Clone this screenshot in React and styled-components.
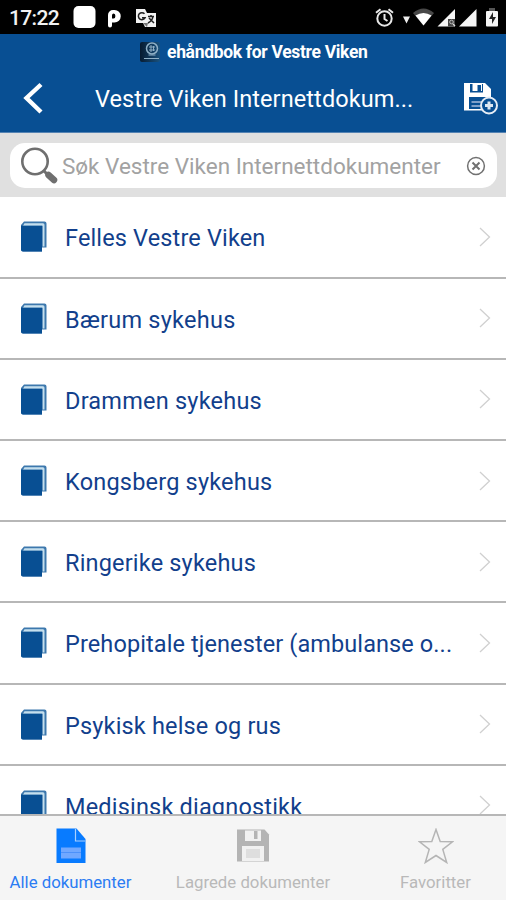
import React from 'react';
import styled, { createGlobalStyle } from 'styled-components';

const GlobalStyle = createGlobalStyle`
  * { box-sizing: border-box; }
  body { margin: 0; background: #fff; font-family: Roboto, sans-serif; }
`;

const Screen = styled.div`
  display: flex;
  flex-direction: column;
  width: 506px;
  height: 900px;
  overflow: hidden;
  background: #fff;
`;

const StatusBar = styled.div`
  display: flex;
  flex: none;
  align-items: center;
  justify-content: space-between;
  height: 34px;
  padding: 0 7px 0 9px;
  background: #000;
`;

const StatusGroup = styled.div`
  display: flex;
  align-items: center;
  height: 34px;
`;

const Clock = styled.span`
  width: 64px;
  color: #f2f2f2;
  font-size: 21px;
  font-weight: 500;
  line-height: 34px;
  letter-spacing: -0.65px;
  padding-top: 2px;
`;

const Header = styled.header`
  flex: none;
  height: 99px;
  background: #084f93;
  border-bottom: 1px solid #5583b3;
`;

const Brand = styled.div`
  display: flex;
  align-items: center;
  height: 36px;
  padding: 0 0 0 140px;
  gap: 7px;
  color: #fff;
  font-size: 17.5px;
  font-weight: 700;
  letter-spacing: -0.32px;
  white-space: nowrap;
`;

const TitleRow = styled.div`
  display: flex;
  align-items: center;
  height: 58px;
  padding: 0 8px 0 22px;
`;

const Title = styled.h1`
  flex: 1;
  margin: 0 0 0 51px;
  color: #fff;
  font-size: 23.5px;
  font-weight: 400;
  letter-spacing: 0.1px;
  line-height: 58px;
  white-space: nowrap;
`;

const SearchBar = styled.div`
  flex: none;
  height: 64px;
  padding: 10px 9px 9px 10px;
  background: #e0e0e0;
`;

const SearchField = styled.div`
  display: flex;
  align-items: center;
  height: 45px;
  padding: 0 11px 0 9px;
  border-radius: 15px;
  background: #fff;
`;

const Placeholder = styled.span`
  flex: 1;
  margin-left: 3px;
  padding-top: 2px;
  color: #a2a2a2;
  font-size: 22.5px;
  line-height: 45px;
  white-space: nowrap;
`;

const List = styled.main`
  flex: 1;
  min-height: 0;
  overflow: hidden;
`;

const Row = styled.div`
  display: flex;
  align-items: center;
  height: 81.2px;
  padding: 0 14px 0 20px;
  border-bottom: 2px solid #b7b7b7;

  &:first-child {
    height: 81.6px;
  }
`;

const RowLabel = styled.span`
  flex: 1;
  margin-left: 18px;
  padding-top: 3px;
  color: #123f8c;
  font-size: 23.5px;
  letter-spacing: ${(p) => p.$spacing}px;
  white-space: nowrap;
`;

const NavBar = styled.nav`
  display: flex;
  flex: none;
  height: 86px;
  background: #f5f5f5;
  border-top: 2px solid #b7b7b7;
`;

const NavItem = styled.div`
  display: flex;
  flex-direction: column;
  align-items: center;
  width: ${(p) => p.$width}px;
  padding-top: 12px;
  color: ${(p) => (p.$active ? '#2b7cf3' : '#b9b9b9')};
`;

const NavLabel = styled.span`
  margin-top: 6px;
  font-size: 16.8px;
  line-height: 24px;
  white-space: nowrap;
`;

const NotificationIcons = () => (
  <svg width="90" height="24" viewBox="0 0 90 24">
    <rect x="0.5" y="1" width="22" height="22" rx="5" fill="#fff" />
    <path d="M35 20.500a2 2 0 0 0 4 0v-3h2.500a6.200 6.200 0 0 0 0-12.500H40a5 5 0 0 0-5 5zM39 10.500q0-2 1.700-2t1.700 2.500-1.700 2.500H39z" fill="#fff" fillRule="evenodd" />
    <path d="M63 4h9l2 4h9v14H72l-2-4h-7z" fill="#f2f2f2" />
    <path d="M71.500 8.800a3.500 3.500 0 1 0 .5 4h-3M75 11.500h6M78 10v1.500M80 11.500c-.5 3-2 5-5 6.500M76 13l5 5" fill="none" stroke="#222" strokeWidth="1.500" />
    <path d="M70 18l4 4 1-4z" fill="#777" />
  </svg>
);

const SystemIcons = () => (
  <svg width="124" height="24" viewBox="0 0 124 24">
    <g fill="none" stroke="#e8e8e8" strokeWidth="2">
      <circle cx="9.500" cy="13.500" r="7.200" />
      <path d="M9.500 9v5l3 2M1 7.800l4.500-3.600M18 7.800l-4.500-3.600" />
    </g>
    <path d="M28 11.500h7l-3.500 7z" fill="#eee" />
    <path d="M38 8Q48.500 -1 59 8l-10.500 12.500z" fill="#484848" />
    <path d="M40.500 10.500Q48.500 5.500 56.500 10.500L48.500 20.500z" fill="#fff" />
    <path d="M62.500 21.500L80 4v17.500zM84 21.500L101.500 4v17.500z" fill="#f5f5f5" />
    <rect x="73" y="14" width="7" height="7.500" fill="#444" />
    <path d="M80 21l-2-2" stroke="#ddd" strokeWidth="1.500" />
    <circle cx="76.500" cy="17" r="1.800" fill="none" stroke="#bbb" />
    <path d="M114 3h6v3h-6z" fill="#555" />
    <rect x="111" y="6" width="12" height="15.500" rx="1" fill="#f5f5f5" />
    <path d="M118 7l-4 7h3v5l4-7h-3z" fill="#222" />
  </svg>
);

const BrandIcon = () => (
  <svg width="20" height="20" viewBox="0 0 20 20">
    <defs>
      <linearGradient id="brandShade">
        <stop stopColor="#071b30" />
        <stop offset="1" stopColor="#19527f" />
      </linearGradient>
    </defs>
    <rect width="20" height="20" rx="2" fill="url(#brandShade)" />
    <g fill="none" stroke="#8fb0c6">
      <circle cx="12" cy="6.500" r="5.500" strokeWidth="1.500" />
      <path d="M9 5h6M9 8h6M11 3v7M13.500 4v5M8.500 13h7M4 16.500h15" />
    </g>
  </svg>
);

const BackIcon = () => (
  <svg width="22" height="34" viewBox="0 0 22 34">
    <path d="M19 2.500L4.500 16l14.500 14" fill="none" stroke="#fff" strokeWidth="4.400" />
  </svg>
);

const SaveAddIcon = () => (
  <svg width="34" height="34" viewBox="0 0 34 34">
    <path d="M0 1h21l6 6v21.500H0z" fill="#fff" />
    <path d="M6 2h2.500v7H18V2h1v8.500H6zM5 15h18v12H5z" fill="#084f93" />
    <path d="M13.500 3h3.500v6h-3.500z" fill="#084f93" />
    <path d="M7.500 20h10M7.500 24h9" stroke="#7fa0c9" strokeWidth="2" />
    <circle cx="25" cy="23.500" r="8" fill="#084f93" stroke="#e6edf5" strokeWidth="2" />
    <path d="M25 19.500v8M21 23.500h8" stroke="#dce7f2" strokeWidth="3" />
  </svg>
);

const SearchIcon = () => (
  <svg width="40" height="40" viewBox="0 0 40 40">
    <circle cx="16" cy="15.500" r="12.700" fill="none" stroke="#6f6f6f" strokeWidth="2.600" />
    <path d="M24.500 24.500l4 4" stroke="#6f6f6f" strokeWidth="3" />
    <path d="M29.500 29l5.500 5" stroke="#6f6f6f" strokeWidth="6.500" strokeLinecap="round" />
  </svg>
);

const ClearIcon = () => (
  <svg width="20" height="20" viewBox="0 0 20 20" fill="none" stroke="#717171">
    <circle cx="10" cy="10" r="8.400" strokeWidth="1.500" />
    <path d="M6.500 6.500l7 7M13.500 6.500l-7 7" strokeWidth="2" />
  </svg>
);

const BookIcon = () => (
  <svg width="27" height="31" viewBox="0 0 27 31">
    <path d="M4 0.500h20.500a2 2 0 0 1 2 2V26.500h-4.500v4H3a2 2 0 0 1-2-2V4z" fill="#3d78ad" />
    <path d="M4.500 2.200H23q1.500 0 1.500 1.500V25.500h-1.800V4.800H3z" fill="#c5dfee" />
    <path d="M1 4.800h21V30.500H3a2 2 0 0 1-2-2z" fill="#084f93" />
  </svg>
);

const ChevronIcon = () => (
  <svg width="14" height="22" viewBox="0 0 14 22">
    <path d="M2 2l9.500 9L2 20" fill="none" stroke="#d0d0d0" strokeWidth="1.300" />
  </svg>
);

const DocumentIcon = () => (
  <svg width="30" height="36" viewBox="0 0 30 36">
    <path d="M0.500 0.500h20L29.500 11v24h-29z" fill="#087bff" />
    <path d="M19.500 1v12h9.500" fill="none" stroke="#a7d0ff" strokeWidth="1.200" />
    <path d="M5 19.500h20v11H5z" fill="#70a8ff" />
    <path d="M5 24.500h20" stroke="#4c91fa" />
  </svg>
);

const SaveIcon = () => (
  <svg width="34" height="36" viewBox="0 0 34 36">
    <path d="M1 1.500h27.500l4.500 5v27H1z" fill="#b4b4b4" />
    <path d="M9 2.500h16v10.500H9zM6 18h22v15H6z" fill="#f1f1f1" />
    <path d="M18 3h3.500v8H18z" fill="#b4b4b4" />
    <path d="M10 21h14v9H10z" fill="#dedede" />
  </svg>
);

const StarIcon = () => (
  <svg width="36" height="36" viewBox="0 0 36 36">
    <path d="M18 1.500l4.200 12 12.300.3-9.700 7.600L28.700 34.500 18 27.500 7.300 34.500l3.900-13.100-9.700-7.600 12.300-.3z" fill="none" stroke="#b5b5b5" strokeWidth="1.500" />
  </svg>
);

const folders = [
  { name: 'Felles Vestre Viken', spacing: 0.15 },
  { name: 'Bærum sykehus', spacing: 0.25 },
  { name: 'Drammen sykehus', spacing: 0.22 },
  { name: 'Kongsberg sykehus', spacing: 0.2 },
  { name: 'Ringerike sykehus', spacing: 0.18 },
  { name: 'Prehopitale tjenester (ambulanse o...', spacing: 0.1 },
  { name: 'Psykisk helse og rus', spacing: 0.17 },
  { name: 'Medisinsk diagnostikk', spacing: 0.19 },
];

export default function App() {
  return (
    <Screen>
      <GlobalStyle />
      <StatusBar>
        <StatusGroup><Clock>17:22</Clock><NotificationIcons /></StatusGroup>
        <StatusGroup><SystemIcons /></StatusGroup>
      </StatusBar>
      <Header>
        <Brand><BrandIcon />ehåndbok for Vestre Viken</Brand>
        <TitleRow>
          <BackIcon />
          <Title>Vestre Viken Internettdokum...</Title>
          <SaveAddIcon />
        </TitleRow>
      </Header>
      <SearchBar>
        <SearchField>
          <SearchIcon />
          <Placeholder>Søk Vestre Viken Internettdokumenter</Placeholder>
          <ClearIcon />
        </SearchField>
      </SearchBar>
      <List>
        {folders.map((f) => (
          <Row key={f.name}>
            <BookIcon />
            <RowLabel $spacing={f.spacing}>{f.name}</RowLabel>
            <ChevronIcon />
          </Row>
        ))}
      </List>
      <NavBar>
        <NavItem $width={141} $active><DocumentIcon /><NavLabel>Alle dokumenter</NavLabel></NavItem>
        <NavItem $width={224}><SaveIcon /><NavLabel>Lagrede dokumenter</NavLabel></NavItem>
        <NavItem $width={141}><StarIcon /><NavLabel>Favoritter</NavLabel></NavItem>
      </NavBar>
    </Screen>
  );
}
